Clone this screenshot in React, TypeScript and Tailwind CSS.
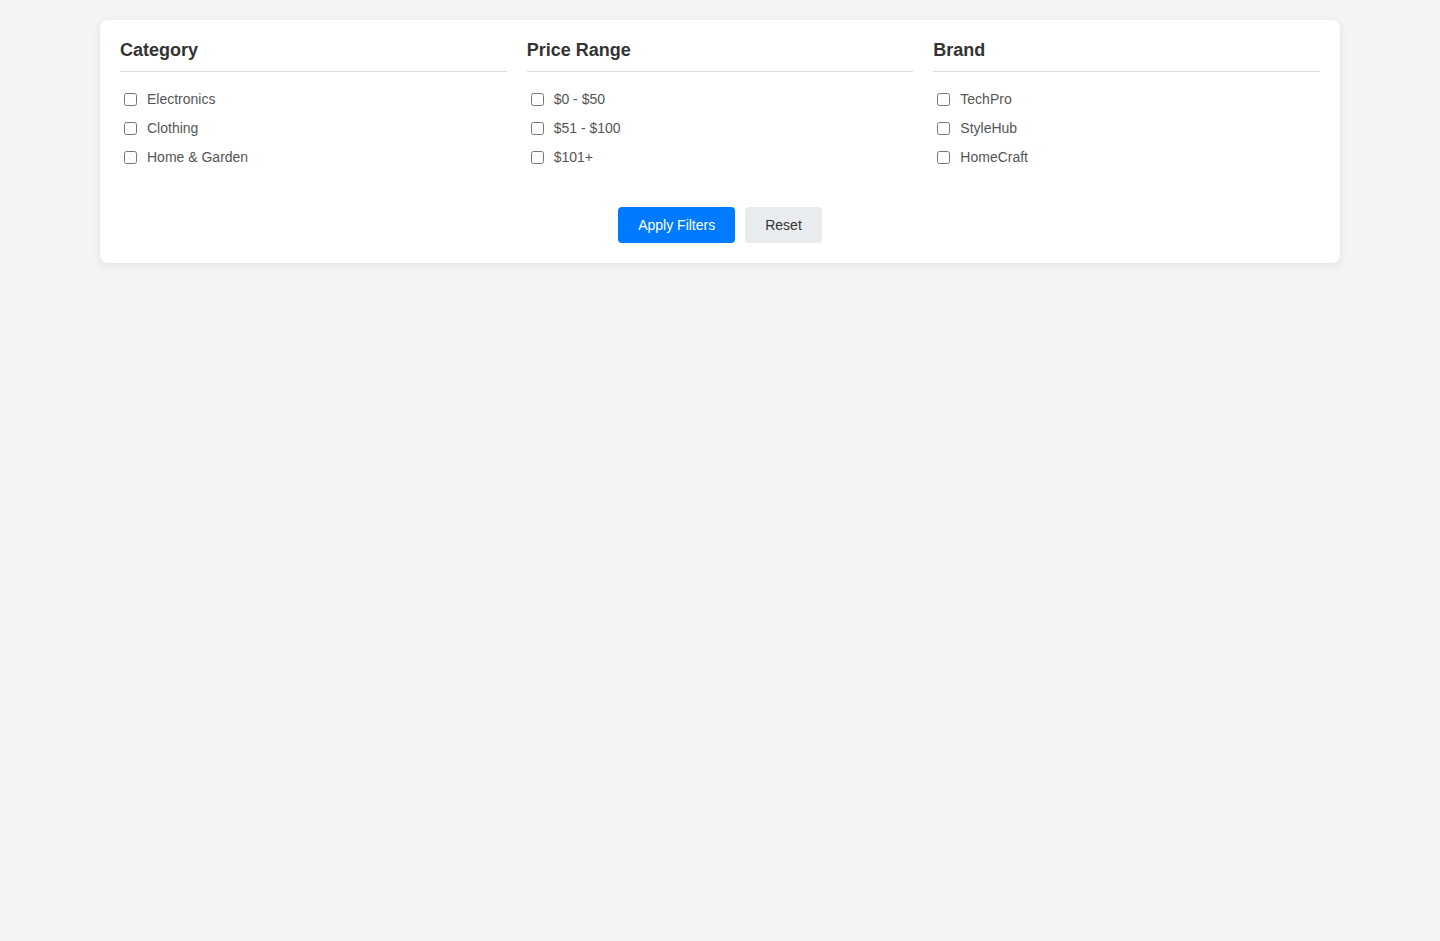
import React from "react";

const groups = [
  { title: "Category", items: ["Electronics", "Clothing", "Home & Garden"] },
  { title: "Price Range", items: ["$0 - $50", "$51 - $100", "$101+"] },
  { title: "Brand", items: ["TechPro", "StyleHub", "HomeCraft"] },
];

export default function App() {
  return (
    <div
      className="min-h-[941px] bg-[#f4f4f4] pt-[20px]"
      style={{ fontFamily: '"Liberation Sans", Arial, sans-serif' }}
    >
      <div className="mx-[100px] bg-white rounded-[8px] shadow-[0_2px_8px_rgba(0,0,0,0.08)] p-[20px]">
        <div className="grid grid-cols-3 gap-[20px]">
          {groups.map((g) => (
            <div key={g.title}>
              <h3 className="text-[18px] leading-[21px] font-bold text-[#333] pb-[10px] border-b border-[#ddd] mb-[17px]">
                {g.title}
              </h3>
              <div>
                {g.items.map((it) => (
                  <label
                    key={it}
                    className="flex items-center h-[21px] mb-[8px] text-[14px] text-[#555] cursor-pointer"
                  >
                    <input
                      type="checkbox"
                      className="w-[13px] h-[13px] ml-[4px] mr-[10px] m-0"
                    />
                    {it}
                  </label>
                ))}
              </div>
            </div>
          ))}
        </div>
        <div className="flex justify-center gap-[10px] mt-[31px]">
          <button className="h-[36px] px-[20px] rounded-[4px] bg-[#007bff] text-white text-[14px]">
            Apply Filters
          </button>
          <button className="h-[36px] px-[20px] rounded-[4px] bg-[#e9ecef] text-[#333] text-[14px]">
            Reset
          </button>
        </div>
      </div>
    </div>
  );
}
